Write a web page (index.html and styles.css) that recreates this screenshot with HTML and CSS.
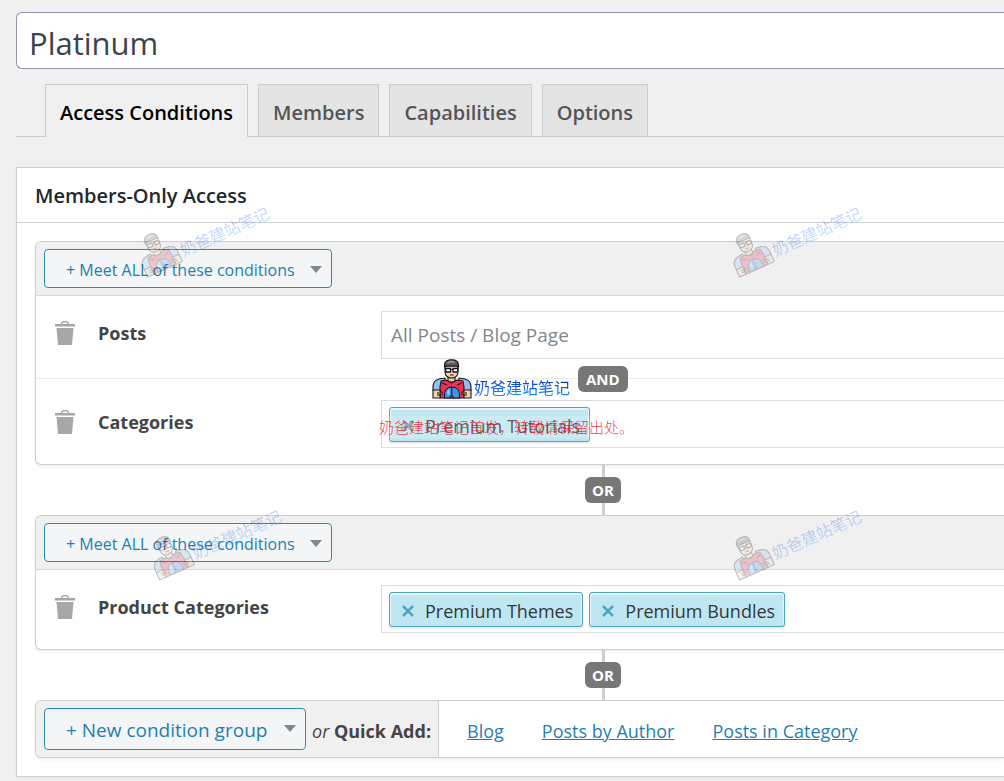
FILE: index.html
```html
<!DOCTYPE html>
<html lang="en">
<head>
  <meta charset="UTF-8">
  <meta name="viewport" content="width=device-width, initial-scale=1.0">
  <title>Platinum</title>
  <link rel="stylesheet" href="styles.css">
</head>
<body>
  <svg class="sprite" aria-hidden="true">
    <symbol id="icon-trash" viewBox="0 0 20 24">
      <path d="M6.500 3.500a3.500 3 0 0 1 7 0" fill="none" stroke="#a7a7a7" stroke-width="1.500"/>
      <path d="M0 3h20v2.500H0z M1.500 7h17l-1.500 17H3z" fill="#a7a7a7"/>
    </symbol>
    <symbol id="icon-remove" viewBox="0 0 12 12">
      <path d="M1 1l10 10M11 1L1 11" fill="none" stroke="#4ca6bf" stroke-width="2.500"/>
    </symbol>
    <symbol id="icon-hero" viewBox="0 0 40 40">
      <g stroke="#1a1418" stroke-width="1.100" stroke-linejoin="round">
        <path d="M16 17v6h7v-6z" fill="#eec49a"/>
        <path d="M1 31v-3c0-4 2-7 6-8l6-1v12l-5 2z" fill="#8fc0f5"/>
        <path d="M39 31v-3c0-4-2-7-6-8l-6-1v12l5 2z" fill="#8fc0f5"/>
        <path d="M8 39V28l1-6 5-1 5.500 3 5.500-3 6 1 1 6v11z" fill="#ee3150"/>
        <path d="M10 24l5 2M30 24l-5 2" fill="none"/>
        <path d="M12.500 39v-3c0-5 3-8 7.500-8s7.500 3 7.500 8v3z" fill="#3f95ea"/>
        <path d="M19.800 28v8l-2 3M19.800 36l2 3" fill="none"/>
        <path d="M1 31h7v2h2v2H8v4H1z" fill="#f3cfaa"/>
        <path d="M39 31h-7v2h-2v2h2v4h7z" fill="#f3cfaa"/>
        <path d="M5 34h4M5 36h3M35 34h-4M35 36h-3" fill="none"/>
        <path d="M13 7h13v6c0 4-3 6-6.500 6S13 17 13 13z" fill="#f5d2ad"/>
        <path d="M12.500 8V6c0-3.500 3-5.300 7-5.300s7 1.800 7 5.300v2l-2-1h-10z" fill="#5c585c"/>
        <path d="M13.500 9.500h5v3.500h-4.500z M21 9.500h5l-.500 3.500H21z" fill="#fff" stroke-width="1.300"/>
        <path d="M18.500 10.500H21M18 16h3.500" fill="none"/>
      </g>
      <path d="M15.500 4q3.500-2.500 7-.500" fill="none" stroke="#b5b2b5" stroke-width="1.200"/>
      <path d="M15 35q0-4 2.500-5v6z" fill="#9fd0ff"/>
    </symbol>
  </svg>

  <main class="wrap">
    <input type="text" class="title-input" value="Platinum" aria-label="Title">

    <nav class="tabs">
      <a href="#" class="tab active">Access Conditions</a>
      <a href="#" class="tab">Members</a>
      <a href="#" class="tab">Capabilities</a>
      <a href="#" class="tab">Options</a>
    </nav>

    <section class="panel">
      <h2 class="panel-title">Members-Only Access</h2>
      <div class="panel-body">

        <div class="group">
          <div class="group-head">
            <div class="picker">
              <select aria-label="Condition group match">
                <option>+ Meet ALL of these conditions</option>
              </select>
            </div>
          </div>
          <div class="group-body">
            <div class="rule">
              <button class="trash" aria-label="Delete Posts"><svg><use href="#icon-trash"/></svg></button>
              <label class="rule-name" for="posts">Posts</label>
              <input type="text" id="posts" class="field" placeholder="All Posts / Blog Page">
            </div>
            <div class="and-line"><span class="badge">AND</span></div>
            <div class="rule">
              <button class="trash" aria-label="Delete Categories"><svg><use href="#icon-trash"/></svg></button>
              <span class="rule-name">Categories</span>
              <div class="field">
                <span class="chip"><button aria-label="Remove"><svg><use href="#icon-remove"/></svg></button>Premium Tutorials</span>
              </div>
            </div>
          </div>
        </div>

        <div class="or-line"><span class="badge">OR</span></div>

        <div class="group">
          <div class="group-head">
            <div class="picker">
              <select aria-label="Condition group match">
                <option>+ Meet ALL of these conditions</option>
              </select>
            </div>
          </div>
          <div class="group-body">
            <div class="rule">
              <button class="trash" aria-label="Delete Product Categories"><svg><use href="#icon-trash"/></svg></button>
              <span class="rule-name">Product Categories</span>
              <div class="field">
                <span class="chip"><button aria-label="Remove"><svg><use href="#icon-remove"/></svg></button>Premium Themes</span>
                <span class="chip"><button aria-label="Remove"><svg><use href="#icon-remove"/></svg></button>Premium Bundles</span>
              </div>
            </div>
          </div>
        </div>

        <div class="or-line"><span class="badge">OR</span></div>

        <div class="group quick-add">
          <div class="quick-new">
            <div class="picker picker-new">
              <select aria-label="New condition group">
                <option>+ New condition group</option>
              </select>
            </div>
            <span class="quick-label"><em>or</em> <strong>Quick Add:</strong></span>
          </div>
          <div class="quick-links">
            <a href="#">Blog</a>
            <a href="#">Posts by Author</a>
            <a href="#">Posts in Category</a>
          </div>
        </div>

      </div>
    </section>
  </main>

  <!-- watermark -->
  <div class="mark tilted mark-1"><svg><use href="#icon-hero"/></svg><span>奶爸建站笔记</span></div>
  <div class="mark tilted mark-2"><svg><use href="#icon-hero"/></svg><span>奶爸建站笔记</span></div>
  <div class="mark tilted mark-3"><svg><use href="#icon-hero"/></svg><span>奶爸建站笔记</span></div>
  <div class="mark tilted mark-4"><svg><use href="#icon-hero"/></svg><span>奶爸建站笔记</span></div>
  <div class="mark mark-main"><svg><use href="#icon-hero"/></svg><span>奶爸建站笔记</span></div>
  <div class="notice">奶爸建站笔记首发，转载请保留出处。</div>
</body>
</html>
```

FILE: styles.css
```css
* {
  box-sizing: border-box;
}
body {
  margin: 0;
  background: #f0f0f0;
  color: #444;
  font-family: "Open Sans", "Noto Sans", "Noto Sans CJK SC", sans-serif;
  font-size: 18px;
  line-height: 24px;
  overflow-x: hidden;
  position: relative;
}
input, select, button {
  font-family: inherit;
}
.sprite {
  display: none;
}
.wrap {
  padding: 12px 0 4px 16px;
}

/* title and tabs */
.title-input {
  display: block;
  width: 100%;
  height: 57px;
  padding: 5px 12px 1px;
  border: 1px solid #8c95a3;
  border-right: none;
  border-radius: 6px 0 0 6px;
  background: #fff;
  color: #3c434a;
  font-size: 31px;
}
.tabs {
  display: flex;
  gap: 10px;
  margin: 15px 0 30px;
  padding-left: 29px;
  border-bottom: 1px solid #ccc;
}
.tab {
  padding: 16px 14px 11px;
  border: 1px solid #ccc;
  border-bottom: none;
  background: #e4e4e4;
  color: #555;
  font-size: 20px;
  font-weight: 600;
  text-decoration: none;
}
.tab.active {
  margin-bottom: -1px;
  background: #f0f0f0;
  color: #000;
}

/* panel */
.panel {
  border: 1px solid #ccd0d4;
  border-right: none;
  background: #fff;
  box-shadow: 0 1px 2px rgba(0, 0, 0, 0.06);
}
.panel-title {
  margin: 0;
  padding: 16px 18px 14px;
  border-bottom: 1px solid #ccd0d4;
  color: #23282d;
  font-size: 20px;
  font-weight: 600;
}
.panel-body {
  padding: 18px 0 18px 18px;
}

/* condition groups */
.group {
  border: 1px solid #ccd0d4;
  border-right: none;
  border-radius: 6px 0 0 6px;
  background: #fff;
  box-shadow: 0 2px 3px rgba(0, 0, 0, 0.06);
  overflow: hidden;
}
.group-head {
  display: flex;
  padding: 7px 8px;
  border-bottom: 1px solid #d6d8da;
  background: #f0f0f0;
}
.group-body {
  padding: 15px 0 16px;
}
.picker {
  position: relative;
  width: 288px;
}
.picker select {
  display: block;
  width: 100%;
  height: 39px;
  padding: 3px 36px 1px 21px;
  border: 1px solid #2a8cb5;
  border-radius: 4px;
  background: #f3f5f6;
  color: #1f7fb0;
  font-size: 16px;
  appearance: none;
}
.picker::after {
  content: "";
  position: absolute;
  top: 17px;
  right: 10px;
  border: 6px solid transparent;
  border-top: 7px solid #82878c;
  border-bottom: none;
  pointer-events: none;
}
.picker-new {
  width: 262px;
}
.picker-new select {
  height: 42px;
  font-size: 19px;
}

/* rules */
.rule {
  display: flex;
  align-items: flex-start;
}
.trash {
  margin: 10px 23px 0 19px;
  padding: 0;
  border: none;
  background: none;
  line-height: 0;
}
.trash svg {
  width: 20px;
  height: 24px;
}
.rule-name {
  flex: 0 0 283px;
  padding-top: 10px;
  font-weight: 700;
}
.field {
  display: flex;
  flex: 1;
  gap: 6px;
  height: 48px;
  padding: 6px 7px;
  border: 1px solid #ddd;
  border-right: none;
  background: #fff;
  font-size: 18px;
}
input.field {
  padding: 0 9px;
  font-size: 19px;
}
input.field::placeholder {
  color: #82878c;
  opacity: 1;
}
.chip {
  display: flex;
  align-items: center;
  height: 35px;
  padding: 2px 9px 0 12px;
  border: 1px solid #4ca6bf;
  border-radius: 3px;
  background: #bfe7f1;
  box-shadow: inset 0 1px 0 1px #e6f6fa, 0 2px 2px rgba(0, 0, 0, 0.08);
  color: #32373c;
}
.chip button {
  margin-right: 11px;
  padding: 0;
  border: none;
  background: none;
  line-height: 0;
}
.chip svg {
  width: 12px;
  height: 12px;
}

/* connectors */
.badge {
  padding: 1px 7px;
  border-radius: 6px;
  background: #777;
  color: #fff;
  font-size: 15px;
  font-weight: 700;
}
.and-line {
  display: flex;
  align-items: center;
  height: 41px;
  padding-bottom: 2px;
}
.and-line::before, .and-line::after {
  content: "";
  flex: 1;
  border-top: 1px solid #e8eaeb;
}
.and-line::before {
  flex: 0 0 542px;
}
.and-line .badge {
  padding: 1px 8px;
}
.or-line {
  display: flex;
  flex-direction: column;
  align-items: center;
  width: 100px;
  margin-left: 518px;
}
.or-line::before, .or-line::after {
  content: "";
  width: 3px;
  height: 12px;
  background: #ccd0d4;
}

/* quick add */
.quick-add {
  display: flex;
}
.quick-new {
  display: flex;
  align-items: center;
  gap: 6px;
  padding: 7px 7px 7px 8px;
  border-right: 1px solid #ccd0d4;
  background: #f0f0f0;
}
.quick-label {
  padding-top: 3px;
}
.quick-links {
  display: flex;
  align-items: center;
  gap: 38px;
  padding: 4px 28px 0;
}
.quick-links a {
  color: #1f7fb0;
}

/* watermark */
.mark {
  position: absolute;
  display: flex;
  align-items: flex-end;
  gap: 2px;
  pointer-events: none;
}
.mark svg {
  width: 40px;
  height: 40px;
}
.mark span {
  background: linear-gradient(#1030c0 20%, #1090ff 85%);
  background-clip: text;
  -webkit-background-clip: text;
  color: transparent;
  font-family: "Noto Sans CJK SC", sans-serif;
  font-size: 16px;
  font-weight: 400;
  line-height: 24px;
  white-space: nowrap;
}
.mark-main {
  top: 359px;
  left: 432px;
}
.tilted {
  opacity: 0.25;
  transform: rotate(-24deg);
}
.mark-1 {
  top: 212px;
  left: 133px;
}
.mark-2 {
  top: 212px;
  left: 725px;
}
.mark-3 {
  top: 515px;
  left: 145px;
}
.mark-4 {
  top: 515px;
  left: 725px;
}
.notice {
  position: absolute;
  top: 416px;
  left: 379px;
  background: rgba(255, 255, 255, 0.2);
  color: rgba(240, 20, 40, 0.85);
  font-family: "Noto Sans CJK SC", sans-serif;
  font-size: 15px;
  font-weight: 300;
  line-height: 22px;
  white-space: nowrap;
}
```
